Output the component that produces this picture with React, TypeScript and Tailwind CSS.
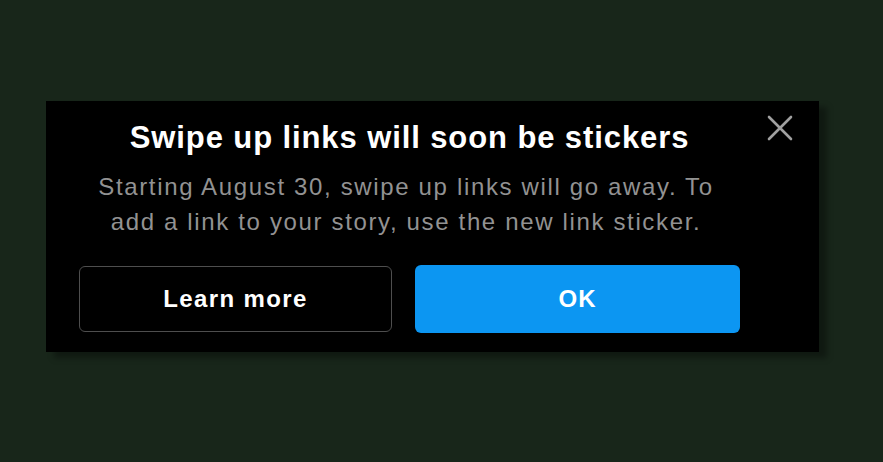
export default function App() {
  return (
    <div
      className="w-[883px] h-[462px] bg-[#18261a] pt-[101px] pl-[46px]"
      style={{ fontFamily: '"Liberation Sans", Arial, sans-serif' }}
    >
      <div className="relative w-[773px] h-[251px] bg-black pl-[33px] pr-[79px] pt-[19px] shadow-[8px_6px_6px_rgba(0,0,0,0.35)]">
        <button className="absolute left-[721px] top-[14px] w-[26px] h-[26px]">
          <svg viewBox="0 0 26 26" width="26" height="26" fill="none" stroke="#a0a0a0" strokeWidth="2.6" strokeLinecap="round">
            <path d="M2 2 L24 24 M24 2 L2 24" />
          </svg>
        </button>
        <div className="flex flex-col items-center">
          <h1 className="text-[31px] leading-[36px] font-bold text-white tracking-[0.9px] whitespace-nowrap">
            Swipe up links will soon be stickers
          </h1>
          <p className="text-[24px] leading-[35px] text-[#929292] text-center mt-[13px] pr-[7px] tracking-[1.65px] whitespace-nowrap">
            Starting August 30, swipe up links will go away. To
            <br />
            add a link to your story, use the new link sticker.
          </p>
        </div>
        <div className="flex gap-[23px] mt-[26px]">
          <button className="w-[313px] h-[66px] mt-[1px] rounded-[6px] border-[1.5px] border-[#4e4e4e] text-white font-bold text-[24px] tracking-[1.4px]">
            Learn more
          </button>
          <button className="w-[325px] h-[68px] rounded-[6px] bg-[#0c96f2] text-white font-bold text-[24px] tracking-[1px]">
            OK
          </button>
        </div>
      </div>
    </div>
  );
}
